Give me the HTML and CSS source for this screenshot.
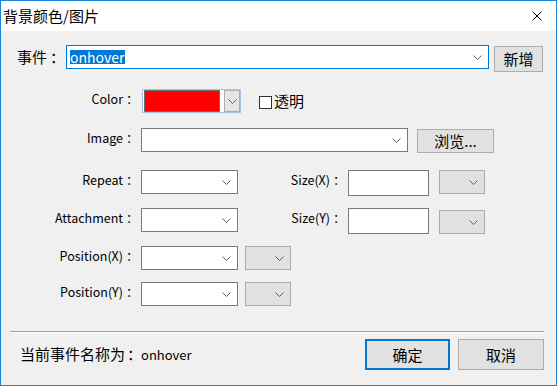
FILE: index.html
```html
<!DOCTYPE html>
<html lang="zh-CN">
<head>
<meta charset="utf-8">
<title>背景颜色/图片</title>
<link rel="stylesheet" href="styles.css">
</head>
<body>
<div class="window">
  <div class="titlebar">
    <span class="title">背景颜色/图片</span>
    <svg class="close" width="10" height="10" viewBox="0 0 10 10"><path d="M0.5 0.5 L9.5 9.5 M9.5 0.5 L0.5 9.5" stroke="#000" stroke-width="1" fill="none"/></svg>
  </div>
  <div class="body">
    <div class="form">
      <div class="row">
        <span class="evt-label">事件<span class="colon">：</span></span>
        <div class="combo combo-focus combo-event">
          <span class="sel">onhover</span>
          <svg class="chev" width="9" height="5" viewBox="0 0 9 5"><path d="M0.5 0.5 L4.5 4.5 L8.5 0.5" stroke="#606060" fill="none"/></svg>
        </div>
        <button class="btn btn-new">新增</button>
      </div>
      <div class="row">
        <span class="lbl">Color<span class="colon">：</span></span>
        <div class="color-combo">
          <span class="swatch"></span>
          <span class="color-drop"><svg width="9" height="5" viewBox="0 0 9 5"><path d="M0.5 0.5 L4.5 4.5 L8.5 0.5" stroke="#606060" fill="none"/></svg></span>
        </div>
        <label class="check"><span class="box"></span><span class="check-text">透明</span></label>
      </div>
      <div class="row">
        <span class="lbl">Image<span class="colon">：</span></span>
        <div class="combo combo-image">
          <svg class="chev" width="9" height="5" viewBox="0 0 9 5"><path d="M0.5 0.5 L4.5 4.5 L8.5 0.5" stroke="#606060" fill="none"/></svg>
        </div>
        <button class="btn btn-browse">浏览...</button>
      </div>
      <div class="row">
        <span class="lbl">Repeat<span class="colon">：</span></span>
        <div class="combo combo-small">
          <svg class="chev" width="9" height="5" viewBox="0 0 9 5"><path d="M0.5 0.5 L4.5 4.5 L8.5 0.5" stroke="#606060" fill="none"/></svg>
        </div>
        <span class="lbl lbl-size">Size(X)<span class="colon">：</span></span>
        <div class="textbox"></div>
        <div class="combo combo-gray combo-unit">
          <svg class="chev" width="9" height="5" viewBox="0 0 9 5"><path d="M0.5 0.5 L4.5 4.5 L8.5 0.5" stroke="#606060" fill="none"/></svg>
        </div>
      </div>
      <div class="row">
        <span class="lbl">Attachment<span class="colon">：</span></span>
        <div class="combo combo-small">
          <svg class="chev" width="9" height="5" viewBox="0 0 9 5"><path d="M0.5 0.5 L4.5 4.5 L8.5 0.5" stroke="#606060" fill="none"/></svg>
        </div>
        <span class="lbl lbl-size">Size(Y)<span class="colon">：</span></span>
        <div class="textbox"></div>
        <div class="combo combo-gray combo-unit combo-unit-y">
          <svg class="chev" width="9" height="5" viewBox="0 0 9 5"><path d="M0.5 0.5 L4.5 4.5 L8.5 0.5" stroke="#606060" fill="none"/></svg>
        </div>
      </div>
      <div class="row">
        <span class="lbl">Position(X)<span class="colon">：</span></span>
        <div class="combo combo-small">
          <svg class="chev" width="9" height="5" viewBox="0 0 9 5"><path d="M0.5 0.5 L4.5 4.5 L8.5 0.5" stroke="#606060" fill="none"/></svg>
        </div>
        <div class="combo combo-gray combo-pos">
          <svg class="chev" width="9" height="5" viewBox="0 0 9 5"><path d="M0.5 0.5 L4.5 4.5 L8.5 0.5" stroke="#606060" fill="none"/></svg>
        </div>
      </div>
      <div class="row">
        <span class="lbl">Position(Y)<span class="colon">：</span></span>
        <div class="combo combo-small">
          <svg class="chev" width="9" height="5" viewBox="0 0 9 5"><path d="M0.5 0.5 L4.5 4.5 L8.5 0.5" stroke="#606060" fill="none"/></svg>
        </div>
        <div class="combo combo-gray combo-pos">
          <svg class="chev" width="9" height="5" viewBox="0 0 9 5"><path d="M0.5 0.5 L4.5 4.5 L8.5 0.5" stroke="#606060" fill="none"/></svg>
        </div>
      </div>
    </div>
    <div class="separator"></div>
    <div class="footer">
      <span class="status">当前事件名称为<span class="colon">：</span><span class="status-val">onhover</span></span>
      <button class="btn btn-ok">确定</button>
      <button class="btn btn-cancel">取消</button>
    </div>
  </div>
</div>
</body>
</html>
```
FILE: styles.css
```css
html, body {
  margin: 0;
  padding: 0;
}

body {
  width: 557px;
  height: 386px;
  overflow: hidden;
  font-family: "Noto Sans CJK SC", sans-serif;
  color: #000;
}

.window {
  width: 557px;
  height: 386px;
  box-sizing: border-box;
  border: 1px solid #1883d7;
  background: #f0f0f0;
  display: flex;
  flex-direction: column;
}

.titlebar {
  height: 30px;
  flex: none;
  background: #fff;
  display: flex;
  align-items: center;
  justify-content: space-between;
  padding: 0 14px 0 2px;
}

.title {
  font-size: 15px;
  line-height: 30px;
}

.close {
  display: block;
}

.body {
  flex: 1;
  display: flex;
  flex-direction: column;
  padding-top: 14px;
}

.form {
  display: grid;
  grid-template-rows: 44px 39px 42px 38px 38px 36px 24px;
}

.row {
  display: flex;
  align-items: flex-start;
}

.colon {
  display: inline-block;
  margin-left: 3px;
}

.evt-label {
  width: 49px;
  margin-left: 16px;
  font-size: 15px;
  line-height: 24px;
}

.lbl {
  width: 134px;
  padding-right: 6px;
  text-align: right;
  font-size: 12.5px;
  line-height: 19px;
  white-space: nowrap;
}

.lbl .colon {
  width: 9px;
  text-align: left;
}

.lbl-size {
  width: 104px;
}

.combo {
  box-sizing: border-box;
  height: 24px;
  background: #fff;
  border: 1px solid #7a7a7a;
  display: flex;
  align-items: center;
}

.combo .chev {
  margin-left: auto;
  margin-right: 6px;
  display: block;
}

.combo-focus {
  border-color: #0078d7;
}

.combo-event {
  width: 423px;
  padding-left: 3px;
}

.sel {
  background: #0078d7;
  color: #fff;
  font-size: 14px;
  line-height: 14px;
  height: 14px;
  padding: 0 1px 0 0;
}

.combo-image {
  width: 267px;
}

.combo-small {
  width: 97px;
}

.combo-gray {
  background: #e1e1e1;
  border-color: #adadad;
}

.combo-unit {
  width: 46px;
  margin-left: 10px;
}

.combo-unit-y {
  margin-top: 2px;
}

.combo-pos {
  width: 46px;
  margin-left: 7px;
}

.textbox {
  box-sizing: border-box;
  width: 81px;
  height: 26px;
  background: #fff;
  border: 1px solid #7a7a7a;
}

.color-combo {
  box-sizing: border-box;
  width: 99px;
  height: 24px;
  margin-left: 1px;
  border: 1px solid #a9c3e8;
  background: #fff;
  padding: 0 0 0 1px;
  display: flex;
  align-items: center;
}

.swatch {
  box-sizing: border-box;
  width: 76px;
  height: 22px;
  background: #ff0000;
  border: 1px solid #6e6e6e;
}

.color-drop {
  box-sizing: border-box;
  width: 16px;
  height: 22px;
  margin-left: 4px;
  background: #e5e5e5;
  border: 1px solid #adadad;
  display: flex;
  align-items: center;
  justify-content: center;
}

.color-drop svg {
  display: block;
}

.check {
  display: flex;
  align-items: center;
  height: 24px;
  margin-left: 18px;
}

.box {
  box-sizing: border-box;
  width: 13px;
  height: 13px;
  margin-top: 3px;
  background: #fff;
  border: 1px solid #333;
}

.check-text {
  margin-left: 2px;
  font-size: 15px;
  line-height: 24px;
}

.btn {
  box-sizing: border-box;
  margin: 0;
  padding: 0;
  background: #e1e1e1;
  border: 1px solid #adadad;
  font-family: "Noto Sans CJK SC", sans-serif;
  font-size: 15px;
  color: #000;
  text-align: center;
}

.btn-new {
  width: 49px;
  height: 26px;
  margin-left: 5px;
  margin-top: 1px;
  line-height: 22px;
}

.btn-browse {
  width: 77px;
  height: 24px;
  margin-left: 9px;
  margin-top: 1px;
  line-height: 20px;
}

.separator {
  margin: 25px 12px 0 9px;
  height: 0;
  border-top: 1px solid #a0a0a0;
  border-bottom: 1px solid #fff;
}

.footer {
  display: flex;
  align-items: center;
  margin-top: 5px;
  padding: 0 12px 0 19px;
}

.status {
  font-size: 15px;
  line-height: 31px;
  margin-right: auto;
}

.status .colon {
  margin-left: 2px;
  width: 14px;
}

.status-val {
  font-size: 13px;
}

.btn-ok {
  width: 85px;
  height: 31px;
  border: 2px solid #0078d7;
}

.btn-cancel {
  width: 86px;
  height: 31px;
  margin-left: 8px;
}
```
